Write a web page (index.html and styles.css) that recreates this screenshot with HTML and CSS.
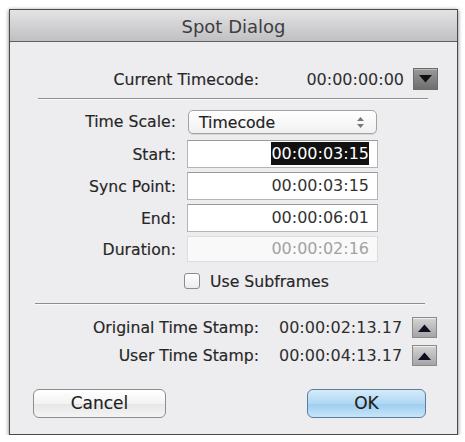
FILE: index.html
```html
<!DOCTYPE html>
<html>
<head>
<meta charset="utf-8">
<link rel="stylesheet" href="styles.css">
</head>
<body>
<div class="window">
  <div class="titlebar">Spot Dialog</div>
  <div class="content">
    <div class="row current">
      <span class="lbl wide">Current Timecode:</span>
      <span class="val tc">00:00:00:00</span>
      <span class="sqbtn"><svg width="13" height="8" viewBox="0 0 13 8"><polygon points="0,0 13,0 6.5,7.5" fill="#111"/></svg></span>
    </div>
    <div class="rule rule1"></div>
    <div class="form">
      <span class="lbl">Time Scale:</span>
      <div class="popup"><span>Timecode</span>
        <svg width="7" height="11" viewBox="0 0 7 11"><polygon points="3.5,0 7,4 0,4" fill="#777"/><polygon points="0,7 7,7 3.5,11" fill="#777"/></svg>
      </div>
      <span class="lbl">Start:</span>
      <div class="field"><span class="sel">00:00:03:15</span></div>
      <span class="lbl">Sync Point:</span>
      <div class="field">00:00:03:15</div>
      <span class="lbl">End:</span>
      <div class="field">00:00:06:01</div>
      <span class="lbl">Duration:</span>
      <div class="field disabled">00:00:02:16</div>
    </div>
    <div class="check-row">
      <span class="box"></span>
      <span class="check-label">Use Subframes</span>
    </div>
    <div class="rule rule2"></div>
    <div class="row stamp">
      <span class="lbl wide">Original Time Stamp:</span>
      <span class="val stampval">00:00:02:13.17</span>
      <span class="sqbtn up"><svg width="13" height="8" viewBox="0 0 13 8"><polygon points="0,8 13,8 6.5,0.5" fill="#0e1020"/></svg></span>
    </div>
    <div class="row stamp stamp2">
      <span class="lbl wide">User Time Stamp:</span>
      <span class="val stampval">00:00:04:13.17</span>
      <span class="sqbtn up"><svg width="13" height="8" viewBox="0 0 13 8"><polygon points="0,8 13,8 6.5,0.5" fill="#0e1020"/></svg></span>
    </div>
    <div class="buttons">
      <div class="btn cancel">Cancel</div>
      <div class="btn ok">OK</div>
    </div>
  </div>
</div>
</body>
</html>
```
FILE: styles.css
```css
html, body {
  margin: 0;
  padding: 0;
  background: #ffffff;
}
body {
  font-family: "DejaVu Sans", "Liberation Sans", sans-serif;
  color: #2c2c2c;
}
.window {
  margin: 9px 0 0 9px;
  width: 447px;
  height: 424px;
  border: 1px solid #4a4a4a;
  background: #edecef;
  box-shadow: 0 1px 4px rgba(0,0,0,0.55);
}
.titlebar {
  height: 31px;
  border-bottom: 1px solid #5f5f62;
  background: linear-gradient(#e4e3e6, #c0bfc2);
  text-align: center;
  font-size: 18px;
  line-height: 34px;
  color: #3e3e40;
}
.content {
  display: flex;
  flex-direction: column;
}
.row {
  display: flex;
  align-items: center;
}
.current {
  margin-top: 26px;
  height: 22px;
}
.lbl {
  font-size: 15.7px;
  text-align: right;
  color: #262626;
  -webkit-text-stroke: 0.15px #262626;
  white-space: nowrap;
}
.lbl.wide {
  width: 249px;
}
.val {
  font-size: 16px;
  color: #2e2e2e;
}
.tc {
  width: 145px;
  text-align: right;
}
.sqbtn {
  width: 25px;
  height: 22px;
  margin-left: 9px;
  box-sizing: border-box;
  border: 1px solid #6c6c6c;
  background: linear-gradient(#9a9a9a, #6e6e6e);
  display: flex;
  align-items: center;
  justify-content: center;
  box-shadow: inset 0 1px 0 #b8b8b8;
}
.sqbtn.up {
  height: 21px;
  margin-left: 12px;
  border-color: #8a8a8a;
  background: linear-gradient(#d4d4d4, #a4a4a4);
  box-shadow: inset 0 1px 0 #eee;
}
.rule {
  height: 1px;
  background: #8e8e90;
  box-shadow: 0 1px 0 #fafafa;
  width: 390px;
}
.rule1 {
  margin: 8px 0 0 28px;
}
.rule2 {
  margin: 14px 0 0 25px;
}
.form {
  margin-top: 11px;
  display: grid;
  grid-template-columns: 166px 191px;
  grid-template-rows: 26px 28px 28px 28px 26px;
  column-gap: 11px;
  row-gap: 4px;
  align-items: center;
}
.popup {
  align-self: start;
  height: 24px;
  margin-left: 1px;
  width: 189px;
  box-sizing: border-box;
  border: 1px solid #a2a2a2;
  border-radius: 5px;
  background: linear-gradient(#ffffff, #f1f1f1);
  display: flex;
  align-items: center;
  justify-content: space-between;
  padding: 0 12px 0 10px;
  font-size: 15.7px;
  color: #222;
  -webkit-text-stroke: 0.15px #222;
  box-shadow: 0 1px 0 #d8d8d8;
}
.form .lbl:first-child {
  align-self: start;
  line-height: 24px;
}
.field {
  height: 28px;
  box-sizing: border-box;
  border: 1px solid #b4b4b4;
  border-top-color: #9a9a9a;
  background: #fff;
  font-size: 16px;
  color: #333;
  text-align: right;
  padding-right: 8px;
  line-height: 26px;
}
.field.disabled {
  height: 26px;
  line-height: 24px;
  border-color: #dcdcdc;
  background: #f9f9fa;
  color: #a2a2a2;
}
.sel {
  background: #111;
  color: #fff;
  padding: 2px 0;
}
.check-row {
  margin: 11px 0 0 174px;
  display: flex;
  align-items: center;
  height: 16px;
}
.box {
  width: 16px;
  height: 16px;
  box-sizing: border-box;
  border: 1px solid #8c8c8c;
  border-radius: 3px;
  background: linear-gradient(#ffffff, #ececec);
}
.check-label {
  margin-left: 10px;
  font-size: 15.7px;
  color: #262626;
  -webkit-text-stroke: 0.15px #262626;
}
.stamp {
  margin-top: 13px;
  height: 21px;
}
.stamp2 {
  margin-top: 7px;
}
.stampval {
  width: 121px;
  margin-left: 20px;
  white-space: nowrap;
}
.buttons {
  margin-top: 23px;
  display: flex;
  height: 29px;
}
.btn {
  box-sizing: border-box;
  height: 29px;
  border-radius: 6px;
  font-size: 17px;
  text-align: center;
  line-height: 27px;
  color: #1e1e1e;
  -webkit-text-stroke: 0.15px #1e1e1e;
}
.cancel {
  margin-left: 23px;
  width: 133px;
  border: 1px solid #8d8d8d;
  background: linear-gradient(#ffffff, #f3f3f3 50%, #e6e6e6 51%, #f4f4f4);
}
.ok {
  margin-left: 141px;
  width: 119px;
  border: 1px solid #5b7e9c;
  background: linear-gradient(#d6ebf9, #b0d7f3 50%, #9ccdf0 51%, #c8e6fa);
}
```
